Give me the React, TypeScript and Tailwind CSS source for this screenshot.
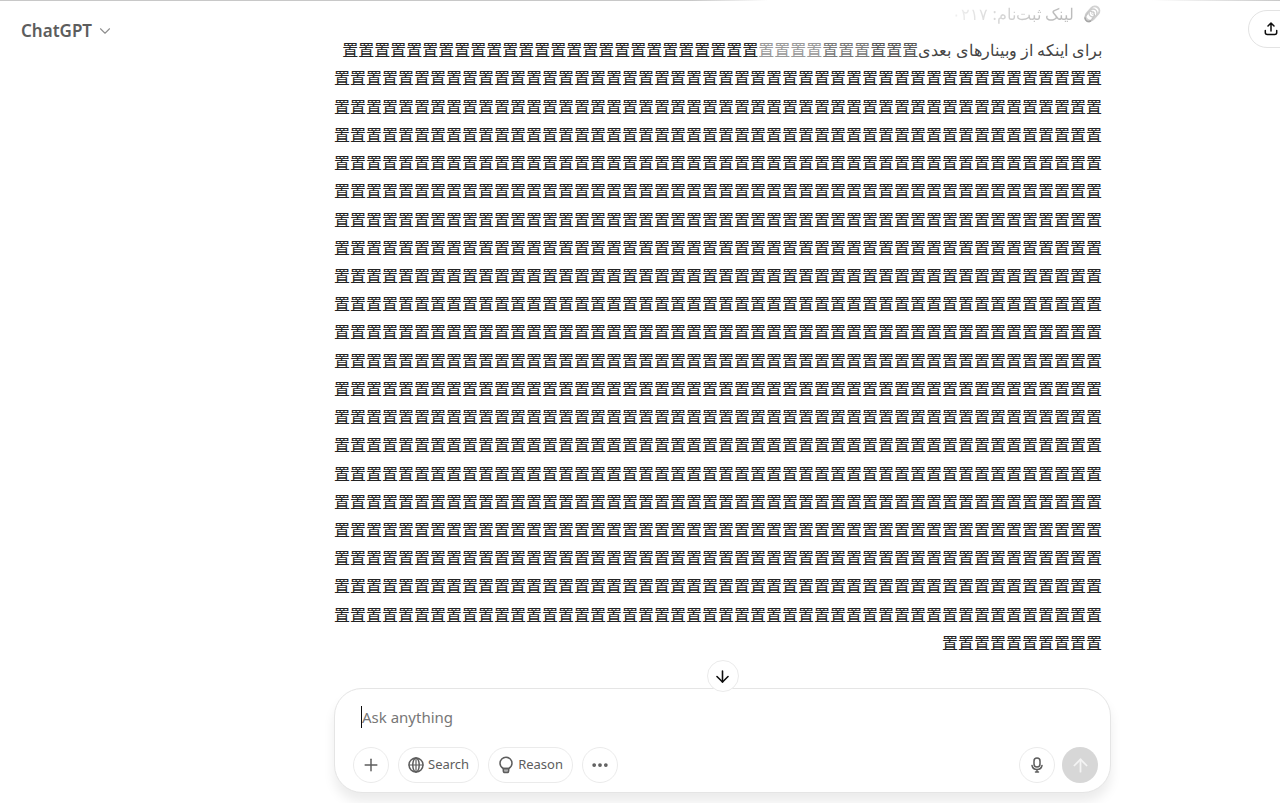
import React, { useState } from 'react';
import { ArrowDown, ArrowUp, ChevronDown, Ellipsis, Plus } from 'lucide-react';

const GLYPH = '置';
const FULL_LINES = 20;

const svgProps = {
  fill: 'none',
  stroke: 'currentColor',
  strokeLinecap: 'round',
  strokeLinejoin: 'round',
} as const;

const ChainIcon = () => (
  <svg width="20" height="20" viewBox="0 0 20 20" {...svgProps} className="shrink-0">
    <rect x="-4.5" y="-8" width="9" height="16" rx="4.5" transform="translate(10.5 9.5) rotate(42)" stroke="#d2d2d2" strokeWidth="2" />
    <rect x="-3.5" y="-5" width="7" height="11" rx="3.5" transform="translate(8 12) rotate(35)" stroke="#c4c4c4" strokeWidth="1.5" />
    <circle cx="11" cy="9" r="4" stroke="#cccccc" strokeWidth="1.5" />
    <circle cx="11" cy="9" r="1.5" stroke="#dcdcdc" />
    <path d="M3 14c.5 3 3 4.5 5.5 3" stroke="#a5a5a5" strokeWidth="1.5" />
  </svg>
);

const ShareIcon = () => (
  <svg width="16" height="16" viewBox="0 0 16 16" {...svgProps} strokeWidth="1.5">
    <path d="M8 10V2.5M5 5l3-3 3 3M2.3 9.5v2c0 1.2.8 2 2 2h7.4c1.2 0 2-.8 2-2v-2" />
  </svg>
);

const GlobeIcon = () => (
  <svg width="16" height="16" viewBox="0 0 16 16" {...svgProps} strokeWidth="1.5">
    <circle cx="8" cy="8" r="7" />
    <ellipse cx="8" cy="8" rx="3.2" ry="7" />
    <path d="M1 8h14M8 1v14" strokeWidth="1.2" />
  </svg>
);

const BulbIcon = () => (
  <svg width="16" height="18" viewBox="0 0 16 18" {...svgProps} strokeWidth="1.5">
    <path d="M5.3 12.5C3.300 11.300 2 9.400 2 7.200a6 6 0 0 1 12 0c0 2.200-1.300 4.100-3.300 5.300z" />
    <path d="M5.3 12.5h5.400v2.200c0 1-.7 1.800-1.700 1.800H7c-1 0-1.700-.8-1.700-1.800z" fill="currentColor" fillOpacity="0.5" />
  </svg>
);

const MicIcon = () => (
  <svg width="16" height="18" viewBox="0 0 16 18" {...svgProps} strokeWidth="1.5">
    <rect x="5" y="2" width="6" height="9" rx="3" />
    <path d="M3 9.500C3.500 12 5.500 13.500 8 13.500s4.500-1.500 5-4M8 13.500V16M6.500 16h3" />
  </svg>
);

const RoundButton: React.FC<{ label: string; children: React.ReactNode }> = ({ label, children }) => (
  <button
    type="button"
    aria-label={label}
    className="flex h-9 w-9 items-center justify-center rounded-full border border-[#ebebeb] text-[#5d5d5d]"
  >
    {children}
  </button>
);

const PillButton: React.FC<{ label: string; children: React.ReactNode }> = ({ label, children }) => (
  <button
    type="button"
    className="flex h-9 items-center gap-1 rounded-full border border-[#ebebeb] px-[9px] text-[13px] text-[#5d5d5d]"
  >
    {children}
    {label}
  </button>
);

export default function App() {
  const [prompt, setPrompt] = useState('');

  return (
    <div className="relative flex h-screen flex-col overflow-hidden bg-white font-['Noto_Sans','Noto_Sans_CJK_SC',sans-serif] text-[#0d0d0d]">
      <div className="flex h-px shrink-0 justify-between">
        <div className="w-3/5 bg-linear-to-r from-[#c8c8c8] from-90% to-white" />
        <div className="w-1/10 bg-linear-to-r from-white to-[#c8c8c8]" />
      </div>

      <header className="absolute inset-x-0 top-0 flex items-center justify-between pt-2.5 pl-[21px]">
        <button type="button" className="flex items-center gap-1 pt-1 text-[17px] font-semibold text-[#5d5d5d]">
          ChatGPT
          <ChevronDown size={18} strokeWidth={1.5} className="text-[#8f8f8f]" />
        </button>
        <button
          type="button"
          aria-label="Share"
          className="-mr-12 flex h-[38px] w-20 items-center rounded-full border border-[#e3e3e3] pl-3.5"
        >
          <ShareIcon />
        </button>
      </header>

      <div className="flex flex-1 flex-col pl-[165px]">
        {/* Conversation */}
        <main dir="rtl" lang="fa" className="mx-auto flex w-full max-w-[777px] flex-1 flex-col justify-between pr-[9px]">
          <p className="mb-2.5 flex items-center gap-2 pt-px">
            <ChainIcon />
            <span className="bg-linear-to-l from-[#bcbcbc] from-20% to-[#f0f0f0] bg-clip-text text-transparent">
              لینک ثبت‌نام: ۰۲۱۷
            </span>
          </p>
          <p className="leading-7 whitespace-nowrap text-[#222222]">
            <span className="text-[#444444]">برای اینکه از وبینارهای بعدی</span>
            {GLYPH.repeat(26)}
            <span className="text-[#999999]">{GLYPH.repeat(4)}</span>
            <span className="text-[#777777]">{GLYPH.repeat(3)}</span>
            <span className="text-[#555555]">{GLYPH.repeat(3)}</span>
          </p>
          {Array.from({ length: FULL_LINES }, (_, i) => (
            <p key={i} className="leading-7 whitespace-nowrap text-[#222222]">
              {GLYPH.repeat(48)}
            </p>
          ))}
          <p className="leading-7 text-[#222222]">{GLYPH.repeat(10)}</p>
        </main>

        {/* Composer */}
        <form className="relative mx-auto mt-[31px] mb-2.5 w-full max-w-[777px] rounded-[28px] border border-[#e5e5e5] bg-white pt-4 pr-3 pb-[9px] pl-[18px] shadow-[0_9px_12px_rgba(0,0,0,0.08)]">
          <button
            type="button"
            aria-label="Scroll to bottom"
            className="absolute -top-[29px] left-1/2 flex h-8 w-8 -translate-x-1/2 items-center justify-center rounded-full border border-[#ebebeb] bg-white"
          >
            <ArrowDown size={19} />
          </button>
          <div className="flex h-6 items-center pl-2">
            <span className="h-[22px] w-px bg-[#0d0d0d]" />
            <input
              aria-label="Message"
              placeholder="Ask anything"
              value={prompt}
              onChange={(e) => setPrompt(e.target.value)}
              className="min-w-0 flex-1 text-[15px] caret-transparent outline-none placeholder:text-[#777777]"
            />
          </div>
          <div className="mt-[18px] flex items-center justify-between">
            <div className="flex gap-[9px]">
              <RoundButton label="Add"><Plus size={20} strokeWidth={1.75} /></RoundButton>
              <PillButton label="Search"><GlobeIcon /></PillButton>
              <PillButton label="Reason"><BulbIcon /></PillButton>
              <RoundButton label="More"><Ellipsis size={20} strokeWidth={2.5} /></RoundButton>
            </div>
            <div className="flex gap-[7px]">
              <RoundButton label="Dictate"><MicIcon /></RoundButton>
              <button
                type="submit"
                disabled
                aria-label="Send"
                className="flex h-9 w-9 items-center justify-center rounded-full bg-[#d7d7d7] text-[#f4f4f4]"
              >
                <ArrowUp size={21} />
              </button>
            </div>
          </div>
        </form>
      </div>
    </div>
  );
}
